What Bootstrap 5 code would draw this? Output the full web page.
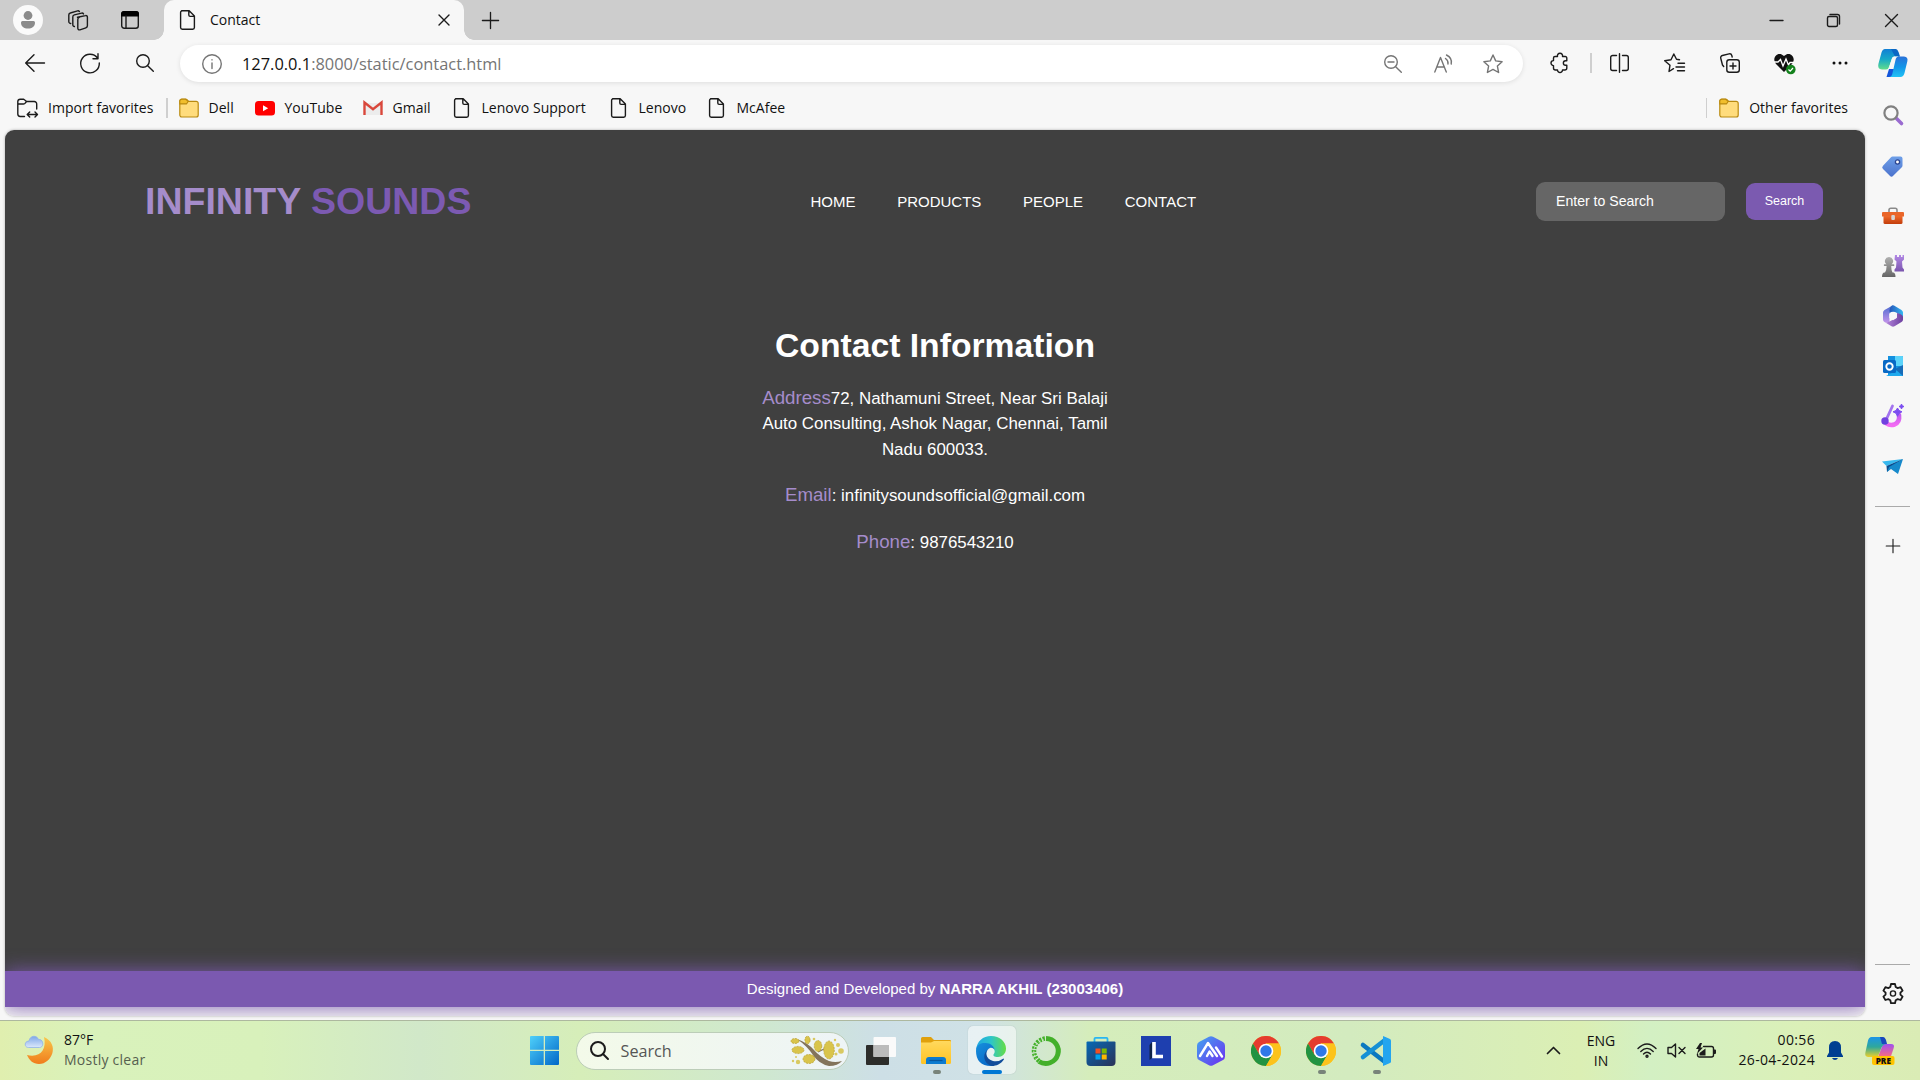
<!DOCTYPE html>
<html lang="en">
<head>
<meta charset="utf-8">
<meta name="viewport" content="width=device-width, initial-scale=1">
<title>Contact</title>
<link href="https://cdn.jsdelivr.net/npm/bootstrap@5.3.0/dist/css/bootstrap.min.css" rel="stylesheet">
<style>
  body { width: 1920px; height: 1080px; overflow: hidden; background: #f7f7f7; font-family: "Open Sans", "Noto Sans", sans-serif; font-size: 14px; line-height: 20px; color: #111; }
  svg { display: block; overflow: visible; flex: none; }
  .ln { fill: none; stroke: #1b1b1b; stroke-width: 1.4; stroke-linecap: round; stroke-linejoin: round; }
  .ln.grey { stroke: #757575; }
  .slot { display: flex; align-items: center; justify-content: center; flex: none; }
  .w28 { width: 28px; } .w30 { width: 30px; } .w40 { width: 40px; } .w49 { width: 49px; } .w50 { width: 50px; } .w52 { width: 52px; } .w54 { width: 54px; } .w55 { width: 55px; } .w56 { width: 56px; } .w58 { width: 57.5px; }

  .titlebar { height: 40px; background: #cdcdcd; padding-left: 3px; }
  .avatar { width: 30px; height: 30px; background: #fafafa; }
  .tab-active { position: relative; width: 300px; height: 40px; margin-left: 8px; background: #f7f7f7; border-radius: 10px 10px 0 0; padding: 0 11px 0 14px; }
  .tab-active::before, .tab-active::after { content: ""; position: absolute; bottom: 0; width: 10px; height: 10px; }
  .tab-active::before { left: -10px; background: radial-gradient(circle at 0 0, #cdcdcd 9.5px, #f7f7f7 10px); }
  .tab-active::after { right: -10px; background: radial-gradient(circle at 100% 0, #cdcdcd 9.5px, #f7f7f7 10px); }
  .tab-title { margin-left: 12px; }

  .toolbar { height: 46px; padding-left: 7px; }
  .address { width: 1343px; height: 37px; margin: 1px 9px 0 7px; background: #fff; box-shadow: 0 1px 5px rgba(0,0,0,.1); border-radius: 19px; padding-left: 22px; padding-right: 6px; }
  .url { margin-left: 20px; font-size: 16.4px; color: #757575; }
  .url b { font-weight: 400; color: #111; }
  .vline { width: 1.5px; height: 20px; background: #cfcfcf; flex: none; }

  .favbar { height: 44px; width: 1868px; padding-left: 17px; }
  .fav { display: flex; align-items: center; gap: 10px; flex: none; white-space: nowrap; letter-spacing: .03px; }
  .f1 { width: 149px; } .f2 { width: 76px; margin-left: 11px; } .f3 { width: 108px; } .f4 { width: 89px; } .f5 { width: 157px; } .f6 { width: 98px; }
  .fav-other { padding-right: 20px; }
  .fav-other .vline { margin-right: 2px; }

  .viewport { width: 1860px; height: 886px; margin-left: 5px; background: linear-gradient(#404040 0 841px, #f2f2f2 841px); border-radius: 9px; overflow: hidden; font-family: "Liberation Sans", Arial, sans-serif; color: #fff; box-shadow: 0 0 3px rgba(0,0,0,.3); }
  .site-head { height: 141px; padding: 2px 42px 0 140px; }
  .brandname { font-size: 37.5px; font-weight: 700; line-height: 1; color: #a58ccb; width: 665.5px; white-space: nowrap; }
  .brandname span { color: #7c5ab2; }
  .site-nav { gap: 41.7px; font-size: 15px; width: 725.5px; }
  .site-nav a { color: #fff; text-decoration: none; }
  .search-field { width: 189px; height: 39px; background: #666; border: 0; border-radius: 9px; padding: 0 20px 2px; font-size: 14.1px; color: #fff; }
  .search-field::placeholder { color: #fff; opacity: 1; }
  .search-btn { width: 77px; height: 37px; margin-left: 21px; background: #7b5ab0; border: 0; border-radius: 9px; color: #fff; font-size: 12.5px; padding: 0 0 2px; }
  .contact { height: 700px; padding-top: 54px; font-size: 16.9px; line-height: 25.3px; }
  .contact h2 { font-size: 33.7px; line-height: 40px; font-weight: 700; margin: 0 0 20px; }
  .contact p { width: 350px; margin: 0 auto 20.5px; }
  .contact .label { font-size: 18.7px; color: #a58ccb; }
  .site-foot { height: 36px; background: #7b59b0; box-shadow: 0 0 19px rgba(123,89,176,.95); font-size: 15px; }

  .rail { position: absolute; left: 1868px; top: 90px; width: 49px; height: 928px; }
  .rail .slot { height: 50px; }
  .rail .slot:nth-child(2) { margin-top: 1px; }
  .rail hr { width: 35px; margin: 0 0 0 7px; border: 0; border-top: 1.5px solid #aaa; opacity: 1; }
  .rail .rail-end { margin-top: 15px; }
  .rail .rail-add { margin-top: 14px; }
  .rail-foot { height: 54px; }
  .rail-foot .slot { height: 54px; }

  .taskbar { height: 60px; margin-top: 4px; border-top: 1px solid #adb89f; padding-left: 25px;
    background: linear-gradient(90deg, #e0efaf 0, #d9f2bb 90px, #d8f1bb 260px, #d1e8c9 420px, #d6eeb9 580px, #cfe8cf 760px, #cddfe6 880px, #cfe1e6 980px, #d5edbb 1090px, #d3ebbf 1350px, #dbefb4 1580px, #d3f0c3 1650px, #dbf0b8 1800px, #daecb5 1920px); }
  .weather { width: 504.5px; gap: 10px; padding-bottom: 2px; }
  .weather-note { color: #56604f; letter-spacing: .25px; }
  .tasksearch { width: 273px; height: 38px; margin-left: 17px; border-radius: 19px; background: linear-gradient(90deg, #f3fae9, #eef4f6); border: 1px solid #bccdb8; padding: 0 5px 0 13px; font-size: 16.2px; color: #555; }
  .tasksearch .ln { stroke-width: 2; }
  .tasksearch span { margin-left: 12px; }
  .apps { margin-left: 5px; }
  .app { position: relative; width: 55px; height: 59px; }
  .app.running::after, .app.current::after { content: ""; position: absolute; bottom: 6px; left: 24px; width: 8px; height: 4px; border-radius: 2px; background: #78837a; }
  .app.current::after { left: 18px; width: 20px; background: #0078d4; }
  .app.current::before { content: ""; position: absolute; inset: 5px 3px 6px 4px; border-radius: 5px; background: rgba(255,255,255,.52); box-shadow: 0 0 1px #9aa; }
  .app svg { position: relative; z-index: 1; }
  .lang { width: 44px; margin-right: 10px; }
  .clock { width: 94px; white-space: nowrap; letter-spacing: .35px; padding-bottom: 1px; }
  .tray-end { width: 15px; }
</style>
<script src="https://cdn.jsdelivr.net/npm/bootstrap@5.3.0/dist/js/bootstrap.bundle.min.js"></script>
</head>
<body>
<svg width="0" height="0" class="position-absolute" aria-hidden="true">
  <defs>
    <linearGradient id="gFold" x2="0" y2="1"><stop stop-color="#ffd95e"/><stop offset="1" stop-color="#ffc323"/></linearGradient>
    <linearGradient id="gWin" x2="1" y2="1"><stop stop-color="#4fd0fa"/><stop offset="1" stop-color="#0067c8"/></linearGradient>
    <linearGradient id="gMoon" x2="0" y2="1"><stop stop-color="#f9c74a"/><stop offset="1" stop-color="#f07c1c"/></linearGradient>
    <linearGradient id="gCloud" x2="0" y2="1"><stop stop-color="#7ea6e8"/><stop offset="1" stop-color="#dbe8fb"/></linearGradient>
    <linearGradient id="gCopA" x2="0" y2="1"><stop stop-color="#127fd5"/><stop offset=".5" stop-color="#17a9c8"/><stop offset="1" stop-color="#62dd8b"/></linearGradient>
    <linearGradient id="gCopB" x2="0" y2="1"><stop stop-color="#2a72d8"/><stop offset=".5" stop-color="#1295e8"/><stop offset="1" stop-color="#22c2f5"/></linearGradient>
    <linearGradient id="gPreA" x2="0" y2="1"><stop stop-color="#1c94e8"/><stop offset=".5" stop-color="#2fa89b"/><stop offset="1" stop-color="#ecd02a"/></linearGradient>
    <linearGradient id="gPreB" x2="0" y2="1"><stop stop-color="#a050f0"/><stop offset="1" stop-color="#fb6e7c"/></linearGradient>
    <linearGradient id="gEdgeT" x2="1"><stop stop-color="#1fa6e3"/><stop offset=".5" stop-color="#2dc5c9"/><stop offset="1" stop-color="#66dd45"/></linearGradient>
    <linearGradient id="gEdgeL" x2=".6" y2="1"><stop stop-color="#1790dc"/><stop offset="1" stop-color="#0869c8"/></linearGradient>
    <linearGradient id="gStore" x2="1" y2="1"><stop stop-color="#0669b5"/><stop offset="1" stop-color="#2c3257"/></linearGradient>
    <linearGradient id="gHex" x2="1" y2="1"><stop stop-color="#42a6f0"/><stop offset="1" stop-color="#6d2cf0"/></linearGradient>
    <linearGradient id="gTag" x2="0" y2="1"><stop stop-color="#6e9fe8"/><stop offset="1" stop-color="#4c73cd"/></linearGradient>
    <linearGradient id="gBox" x2="0" y2="1"><stop stop-color="#ef6a2b"/><stop offset="1" stop-color="#c23d0b"/></linearGradient>
    <linearGradient id="gPawn" x2="0" y2="1"><stop stop-color="#b0b0b0"/><stop offset="1" stop-color="#666"/></linearGradient>
    <linearGradient id="gRook" x2="0" y2="1"><stop stop-color="#b389e6"/><stop offset="1" stop-color="#7a55ad"/></linearGradient>
    <linearGradient id="gPink" x2="0" y2="1"><stop stop-color="#c05df0"/><stop offset="1" stop-color="#f36bf3"/></linearGradient>
    <linearGradient id="gM1" x2="0" y2="1"><stop stop-color="#4a6bd0"/><stop offset="1" stop-color="#c193ea"/></linearGradient>
    <linearGradient id="gM2" x2="1" y2="0"><stop stop-color="#2455b8"/><stop offset="1" stop-color="#36b8f2"/></linearGradient>
    <linearGradient id="gM3" x2="1" y2="0"><stop stop-color="#b98ae0"/><stop offset="1" stop-color="#6c3f9f"/></linearGradient>
    <symbol id="file" viewBox="0 0 20 20"><path class="ln" d="M3.600.7h7.600l5.200 5.200v11.700a1.700 1.700 0 0 1-1.700 1.700H4.300a1.700 1.700 0 0 1-1.700-1.700V2.400A1.700 1.700 0 0 1 4.300.7M10.800.9v4.200a1.300 1.300 0 0 0 1.300 1.300h4.200"/></symbol>
    <symbol id="folder" viewBox="0 0 20 20"><path d="M.8 5v11.800A2 2 0 0 0 2.800 19h14.400a2 2 0 0 0 2-2V5.400a2 2 0 0 0-2-2H9.600L8 1.700A2 2 0 0 0 6.600 1.200H2.800a2 2 0 0 0-2 2z" fill="#ffdc7c" stroke="#b98a10" stroke-width="1.200"/><path d="M.8 5.900V3.200a2 2 0 0 1 2-2h3.800L9.300 3.400 7.800 5.500q-.4.4-1 .4z" fill="#f1be2c" stroke="#b98a10" stroke-width="1.100"/></symbol>
    <symbol id="plus" viewBox="0 0 20 20"><path class="ln" d="M10 1.500v17M1.500 10h17"/></symbol>
    <symbol id="star" viewBox="0 0 20 20"><path d="m10 1 2.700 5.900 6.400.8-4.700 4.400 1.200 6.400L10 15.400l-5.600 3.100 1.200-6.400L.9 7.700l6.400-.8z"/></symbol>
    <symbol id="chrome" viewBox="0 0 30 30"><circle cx="15" cy="15" r="15" fill="#fcc31c"/><path d="M2 7.500A15 15 0 0 1 28 7.500H15L8.500 19z" fill="#e53c2f"/><path d="M2 7.500A15 15 0 0 0 15 30l6.500-11.200L15 15 8.500 18.800z" fill="#229342"/><path d="M15 7.500H28A15 15 0 0 1 15 30l6.500-11.200z" fill="#fcc31c"/><circle cx="15" cy="15" r="7.300" fill="#fff"/><circle cx="15" cy="15" r="5.700" fill="#2f78e8"/></symbol>
  </defs>
</svg>

<header>
  <div class="titlebar d-flex align-items-center">
    <div class="slot w49"><div class="avatar rounded-circle slot"><svg width="14" height="18" viewBox="0 0 14 18" fill="#8b8b8b"><circle cx="7" cy="4.500" r="4.400"/><path d="M0 11.500a1.500 1.500 0 0 1 1.500-1.500h11a1.500 1.500 0 0 1 1.500 1.500c0 4-3 6-7 6s-7-2-7-6z"/></svg></div></div>
    <div class="slot w52"><svg width="21" height="21" viewBox="0 0 21 21" class="ln"><path d="m9.500 7.300 8-1.700a1.500 1.500 0 0 1 1.900 1.500v8.700a2 2 0 0 1-1.500 2l-6 2a1.600 1.600 0 0 1-2.100-1.500V9.400a2 2 0 0 1 1.500-2M6.400 16.500l-.7-.2a1.500 1.500 0 0 1-.9-1.500V6.900a2 2 0 0 1 1.500-2l7.400-1.800q1.200-.2 1.800.8M2.700 13.500l-1-.4a1.500 1.500 0 0 1-.9-1.500V5a2 2 0 0 1 1.500-2L9.600.9q1-.3 1.800.6"/></svg></div>
    <div class="slot w52"><svg width="18" height="18" viewBox="0 0 18 18"><rect class="ln" x=".7" y=".7" width="16.600" height="16.600" rx="2.500"/><path d="M0 5.500V3a3 3 0 0 1 3-3h12a3 3 0 0 1 3 3v2.500z" fill="#000"/><path class="ln" d="M5 5v12"/></svg></div>
    <div class="tab-active d-flex align-items-center">
      <svg width="20" height="20"><use href="#file"/></svg><span class="tab-title">Contact</span>
      <svg class="ms-auto me-1 ln" width="10" height="10" viewBox="0 0 10 10"><path d="m0 0 10 10M10 0 0 10"/></svg>
    </div>
    <div class="slot w52"><svg width="19" height="19"><use href="#plus"/></svg></div>
    <div class="ms-auto d-flex">
      <div class="slot w58"><svg width="13" height="13"><path class="ln" d="M0 6.500h13"/></svg></div>
      <div class="slot w58"><svg class="ln" width="13" height="13" viewBox="0 0 13 13"><rect x=".5" y="2.500" width="10" height="10" rx="1.500"/><path d="M3 .5h7.500a2 2 0 0 1 2 2V10"/></svg></div>
      <div class="slot w58"><svg class="ln" width="13" height="13" viewBox="0 0 13 13"><path d="m.5.5 12 12M12.500.5l-12 12"/></svg></div>
    </div>
  </div>

  <div class="toolbar d-flex align-items-center">
    <div class="slot w56"><svg class="ln" width="20" height="18" viewBox="0 0 20 18"><path d="M9 .7.7 9 9 17.300M1 9h18.500"/></svg></div>
    <div class="slot w54"><svg class="ln" width="20" height="20" viewBox="0 0 20 20"><path d="M17.500 5A9.300 9.300 0 1 0 19.300 10M18 .7v5h-5"/></svg></div>
    <div class="slot w56"><svg class="ln" width="18" height="18" viewBox="0 0 18 18"><circle cx="7" cy="7" r="6.300"/><path d="m11.700 11.700 5.600 5.600"/></svg></div>
    <div class="address d-flex align-items-center">
      <svg class="ln grey" width="20" height="20" viewBox="0 0 20 20"><circle cx="10" cy="10" r="9.300"/><path d="M10 9v5.500M10 5.800v.1"/></svg>
      <span class="url"><b>127.0.0.1</b>:8000/static/contact.html</span>
      <div class="ms-auto d-flex">
        <div class="slot w52"><svg class="ln grey" width="18" height="18" viewBox="0 0 18 18"><circle cx="7" cy="7" r="6.300"/><path d="m11.700 11.700 5.600 5.600M4 7h6"/></svg></div>
        <div class="slot w49"><svg class="ln grey" width="20" height="20" viewBox="0 0 20 20"><path d="M.8 18 6.500 3.500 12.300 18M2.700 13h7.700M11.500 4.500q3 2 2.500 5.500M12.500 1q6 3 4.700 9"/></svg></div>
        <div class="slot w49"><svg class="ln grey" width="20" height="20"><use href="#star"/></svg></div>
      </div>
    </div>
    <div class="slot w54"><svg class="ln" width="19" height="20" viewBox="0 0 19 20"><path d="M5 3.500h2.500a2.600 2.600 0 1 1 5 0h2.800a1.500 1.500 0 0 1 1.500 1.500v2.800h-1.200a2.200 2.200 0 1 0 0 4.500h1.200V15a2 2 0 0 1-2 2h-2.300a2.500 2.500 0 1 1-5 0H5.500a2 2 0 0 1-2-2v-2.400a2.500 2.500 0 1 1 0-5V5A1.500 1.500 0 0 1 5 3.500z"/></svg></div>
    <div class="vline ms-1"></div>
    <div class="slot w55"><svg class="ln" width="19" height="20" viewBox="0 0 19 20"><path d="M9.500.7v18.600M6.500 2.500H2.700a2 2 0 0 0-2 2v11a2 2 0 0 0 2 2h3.800M12.500 2.500h3.800a2 2 0 0 1 2 2v11a2 2 0 0 1-2 2h-3.800"/></svg></div>
    <div class="slot w56"><svg class="ln" width="21" height="20" viewBox="0 0 21 20"><path d="M9.500 15.700 5 18.500l1-6.300-5.300-4.500 6.300-1L9.800 1l2.700 5.300 3 .4M14 10.200h6.500M12 14h8.500M13.500 17.700h7"/></svg></div>
    <div class="slot w55"><svg class="ln" width="20" height="20" viewBox="0 0 20 20"><rect x="6.800" y="6.800" width="12.500" height="12.500" rx="2.500"/><path d="M13 10v6M10 13h6M3.700 13.500 2.500 12 .8 5.500a2.300 2.300 0 0 1 1.600-3L9 .9a2.300 2.300 0 0 1 2.800 1.600l.4 1.500"/></svg></div>
    <div class="slot w55"><svg width="22" height="20" viewBox="0 0 22 20"><path d="M10 19 2 11C-3 5 4-3 10 3c6-6 13 2 8 8z" fill="#111"/><path d="M0 9h4l2.500-2.500L9 13l3-7 2.500 6 1.500-2.500h4" fill="none" stroke="#fff" stroke-width="1.300"/><circle cx="16.800" cy="16.500" r="4.800" fill="#14821d"/><path d="m14.500 16.500 1.700 1.700 2.800-3.200" fill="none" stroke="#fff" stroke-width="1.200"/></svg></div>
    <div class="slot w55"><svg width="16" height="4" fill="#111"><circle cx="2" cy="2" r="1.500"/><circle cx="8" cy="2" r="1.500"/><circle cx="14" cy="2" r="1.500"/></svg></div>
    <div class="slot w50"><svg width="30" height="28" viewBox="0 0 30 28"><path d="M11 20 8.500 28H20q3 0 4-3l1.500-5z" fill="#1456db"/><path d="M7 0h10q2 0 3 3l1.500 4.500h-5q-2 0-2.600 2L11 18q-.7 2.500-3 2.500H4Q-.8 20 .4 15L3.500 3.500Q4.500 0 7 0z" fill="url(#gCopA)"/><path d="M13 0h4.500q2 0 3 3l1.500 4.500h-5z" fill="#0b67c4"/><path d="M14 9.500q.6-2 2.600-2H20L16.500 20H10.500z" fill="#f7f7f7"/><path d="M21 7.500h5q4.500.5 3.300 5L26.500 24q-1 4-4 4H11q2.500 0 3.300-3l3.300-14.500q.7-3 3.400-3z" fill="url(#gCopB)"/></svg></div>
  </div>

  <nav class="favbar d-flex align-items-center">
    <div class="fav f1"><svg class="ln" width="21" height="20" viewBox="0 0 21 20"><path d="M7.500 18.500H3.200a2.400 2.400 0 0 1-2.400-2.400V3.500A2.400 2.400 0 0 1 3.200 1.200h3.500l3 2.300h7.600a2.400 2.400 0 0 1 2.400 2.400V11M.9 6h5.600q1.200 0 1.800-1l1.200-1.500M10.500 16.500h9.700M12.700 14l-2.500 2.500 2.500 2.500M18 14l2.500 2.500L18 19"/></svg><span>Import favorites</span></div>
    <div class="vline"></div>
    <div class="fav f2"><svg width="20" height="20"><use href="#folder"/></svg>Dell</div>
    <div class="fav f3"><svg width="20" height="20"><rect y="3" width="20" height="14.500" rx="3.500" fill="#f00"/><path d="m8 7.200 5.200 3L8 13.300z" fill="#fff"/></svg>YouTube</div>
    <div class="fav f4"><svg width="20" height="20"><path d="M2.500 5h15v12h-15z" fill="#ececec"/><path d="M1.500 17V4.500L10 11.300l8.500-6.800V17" fill="none" stroke="#d9473b" stroke-width="2.400"/></svg>Gmail</div>
    <div class="fav f5"><svg width="20" height="20"><use href="#file"/></svg>Lenovo Support</div>
    <div class="fav f6"><svg width="20" height="20"><use href="#file"/></svg>Lenovo</div>
    <div class="fav"><svg width="20" height="20"><use href="#file"/></svg>McAfee</div>
    <div class="ms-auto fav fav-other"><div class="vline"></div><svg width="20" height="20"><use href="#folder"/></svg><span>Other favorites</span></div>
  </nav>
</header>

<main class="viewport">
  <header class="site-head d-flex align-items-center">
    <div class="brandname">INFINITY <span>SOUNDS</span></div>
    <nav class="site-nav d-flex"><a href="#">HOME</a><a href="#">PRODUCTS</a><a href="#">PEOPLE</a><a href="#">CONTACT</a></nav>
    <input class="search-field" type="text" placeholder="Enter to Search">
    <button class="search-btn" type="button">Search</button>
  </header>
  <section class="contact text-center">
    <h2>Contact Information</h2>
    <p><span class="label">Address</span>72, Nathamuni Street, Near Sri Balaji Auto Consulting, Ashok Nagar, Chennai, Tamil Nadu 600033.</p>
    <p><span class="label">Email</span>: infinitysoundsofficial@gmail.com</p>
    <p><span class="label">Phone</span>: 9876543210</p>
  </section>
  <footer class="site-foot d-flex align-items-center justify-content-center"><span>Designed and Developed by <b>NARRA AKHIL (23003406)</b></span></footer>
</main>

<aside class="rail d-flex flex-column">
  <div class="slot"><svg width="20" height="20" viewBox="0 0 20 20"><path d="m13.500 13.500 5 5" stroke="#9a6bd0" stroke-width="3.600" stroke-linecap="round"/><circle cx="8" cy="8" r="6.600" fill="none" stroke="#808080" stroke-width="2.200"/></svg></div>
  <div class="slot"><svg width="21" height="21" viewBox="0 0 21 21"><path d="M10.500.5h8q2 0 2 2v7q0 1-.7 1.700l-8.600 8.600q-1.700 1.700-3.400 0L1 13q-1.700-1.600 0-3.300l8-8.500q.6-.7 1.500-.7z" fill="url(#gTag)"/><circle cx="15.500" cy="6" r="2.100" fill="#fff" stroke="#2d4691" stroke-width="1.300"/></svg></div>
  <div class="slot"><svg width="22" height="18" viewBox="0 0 22 18"><path d="M7 5.500V3q0-1.800 1.800-1.800h4.400Q15 1.200 15 3v2.500" fill="none" stroke="#8a8a8a" stroke-width="1.600"/><path d="M1 5h20q1 0 1 1v3.500H0V6q0-1 1-1z" fill="#ea662a"/><path d="M1.500 9h19v6.500q0 1.500-1.500 1.500H3q-1.500 0-1.500-1.500z" fill="url(#gBox)"/><rect x="9.300" y="8" width="3.600" height="5" rx="1" fill="#d5d5d5"/></svg></div>
  <div class="slot"><svg width="22" height="22" viewBox="0 0 22 22"><path d="M13 0h2v2h2V0h2v2h1.500V0H22v4.500l-2 2 .5 6 1.500 2v2h-9.500v-2l1.500-2 .5-6-2-2z" fill="url(#gRook)"/><path d="M7 2a4 4 0 0 1 2.500 7.200H12q.8 1 0 1.800H9.200q0 4 1.300 6.500h1q2 .8 2 4.500H0q0-3.700 2-4.500h1q1.600-2.500 1.600-6.500H2.200q-1-1 0-1.800h2.300A4 4 0 0 1 7 2z" fill="url(#gPawn)"/></svg></div>
  <div class="slot"><svg width="20" height="22" viewBox="0 0 20 22"><path d="M10 .2 1.500 5Q0 6 0 7.500v7q0 1.500 1.500 2.500 2.500 1 5-.2V8.500Q6.500 5 10 .2z" fill="url(#gM1)"/><path d="M9 .6q1-.6 2 0l7.500 4.300Q20 6 20 7.500v5q-1.500-2-6-4.500-4-2.500-7.500 0Q6 3 9 .6z" fill="url(#gM2)"/><path d="M20 12v2.500q0 1.500-1.500 2.500l-7 4.300q-1.500.9-3 0L1.500 17q2.500 1 5-.4L14 12.500V8q6 1.500 6 4z" fill="url(#gM3)"/><path d="m10 7 3.700 2v4L10 15.300l-3.700-2.200V9z" fill="#f7f7f7"/></svg></div>
  <div class="slot"><svg width="20" height="20" viewBox="0 0 20 20"><path d="M5 0h14q1 0 1 1v18q0 1-1 1H5z" fill="#1390df"/><path d="M12 0h7q1 0 1 1v9h-8z" fill="#5bd3fa"/><path d="m3 20 17-9v8q0 1-1 1z" fill="#1fa9ed"/><path d="m12 13 8 7V9z" fill="#176cb8"/><rect y="4" width="13" height="13" rx="1.500" fill="#0869c5"/><circle cx="6.500" cy="10.500" r="3.200" fill="none" stroke="#fff" stroke-width="1.900"/></svg></div>
  <div class="slot"><svg width="23" height="24" viewBox="0 0 23 24"><path d="M18 11q1 7-4.500 9.500Q9 22 5.500 19.500" fill="none" stroke="url(#gPink)" stroke-width="4.600" stroke-linecap="round"/><path d="m11.500 2-6 13" stroke="#a273ee" stroke-width="2.800" stroke-linecap="round"/><circle cx="4" cy="17" r="3.700" fill="#7141df"/><path d="m16.500 4 1.500 2.500 3 1.300-3 1.500-1.500 3-1.500-3-3-1.500 3-1.300zM20.500 0l.8 1.700L23 2.500l-1.700.8-.8 1.700-.8-1.700-1.700-.8 1.700-.8z" fill="#7c4df0" stroke="#7c4df0"/></svg></div>
  <div class="slot"><svg width="21" height="15" viewBox="0 0 21 15"><path d="M21 0 0 2.500 4.500 7z" fill="#37b8ee"/><path d="M21 0 4.500 7 5 13l3-3z" fill="#0b4c8d"/><path d="m21 0-5 15-7-5-4 3 2-5z" fill="#1689cb"/></svg></div>
  <hr class="rail-end">
  <div class="slot rail-add"><svg width="16" height="16"><use href="#plus"/></svg></div>
  <div class="rail-foot mt-auto"><hr><div class="slot"><svg class="ln" width="20" height="21" viewBox="0 0 20 21"><path stroke-width="1.800" d="M8 1h4l.7 3 2 1.100 2.900-.9 2 3.400-2.200 2v2l2.200 2-2 3.400-2.900-.9-2 1.100-.7 3H8l-.7-3-2-1.100-2.900.9-2-3.400 2.200-2v-2l-2.200-2 2-3.400 2.900.9 2-1.100z"/><circle cx="10" cy="10.500" r="2.600"/></svg></div></div>
</aside>

<footer class="taskbar d-flex align-items-center">
  <div class="weather d-flex align-items-center">
    <svg width="29" height="28" viewBox="0 0 29 28"><path d="M19 1c16 7 8 27-5 27-6 0-10-4-12-9 13 3 20-5 17-18z" fill="url(#gMoon)"/><path d="M3.500 11.500C-1 11.500-1 5 4 5 5-1 12-1 13.500 3.500c5-1 6 8 1 8z" fill="url(#gCloud)" stroke="#91b3e8" stroke-width=".8"/></svg>
    <div><div>87°F</div><div class="weather-note">Mostly clear</div></div>
  </div>
  <div class="slot"><svg width="29" height="29" viewBox="0 0 29 29" fill="url(#gWin)"><path d="M1 0h12.700v13.700H0V1q0-1 1-1zM15 0h13q1 0 1 1v12.700H15zM0 15h13.700v14H1q-1 0-1-1zM15 15h14v13q0 1-1 1H15z"/></svg></div>
  <div class="tasksearch d-flex align-items-center">
    <svg class="ln" width="19" height="19" viewBox="0 0 19 19"><circle cx="8" cy="8" r="7"/><path d="m13 13 5 5"/></svg>
    <span class="text-nowrap">Search</span>
    <svg class="ms-auto" width="52" height="30" viewBox="0 0 52 30"><path d="M6 3q11 4 17 11t15 11q6 2 13 0-4 5-13 5-10-2-16-11T6 3z" fill="#83745b"/><path d="m25 19-7 4M27 16l8-4" fill="none" stroke="#83745b" stroke-width="1.300"/><g fill="#d9c44b" stroke="#b79d2e" stroke-width=".7" stroke-dasharray="2 1"><ellipse cx="4" cy="5" rx="4" ry="2.500"/><ellipse cx="16.500" cy="4" rx="2.600" ry="3.800"/><ellipse cx="7" cy="14" rx="6" ry="3.600"/><ellipse cx="27" cy="10" rx="3.800" ry="5.500"/><ellipse cx="38" cy="14" rx="5.300" ry="9"/><ellipse cx="18" cy="23" rx="6" ry="4.500"/></g><g fill="#d9c961"><circle cx="2" cy="25" r="1.200"/><circle cx="7" cy="26" r="2.200"/><circle cx="5" cy="21" r="1"/><circle cx="23" cy="3" r="1.300"/><circle cx="44" cy="4" r="1.200"/><circle cx="47" cy="9" r="2"/><circle cx="50" cy="15" r="2.800"/><circle cx="45" cy="18" r="1.500"/></g></svg>
  </div>
  <div class="apps d-flex">
    <div class="app slot"><svg width="30" height="28" viewBox="0 0 30 28"><rect y="8" width="23" height="20" rx="1" fill="#2d2d2b"/><rect x="7.500" width="22.500" height="20" rx="1" fill="#fafafa"/><path d="M7.500 8H23v12H7.500z" fill="#bbb"/></svg></div>
    <div class="app slot running"><svg width="30" height="27" viewBox="0 0 30 27"><path d="M0 1.500Q0 0 1.500 0H10l3 3H29q1 0 1 1v3H0z" fill="#e0a00c"/><path d="M0 5.500h10L13 4h16q1 0 1 1v20.500q0 1.500-1.500 1.500h-27Q0 27 0 25.500z" fill="url(#gFold)"/><path d="M5 27v-4q0-3 3-3h14q3 0 3 3v4z" fill="#0c7bd0"/><path d="M8.500 23.500h13" stroke="#07569d" stroke-width="1.200"/></svg></div>
    <div class="app slot current"><svg width="30" height="30" viewBox="0 0 30 30"><path d="M0 14C1 5 7 0 15 0c9 0 15 6 15 12.500C30 18 26 21 22 21c-4 0-5-1.500-4.500-2.500 1-1.500 1.500-2.500 1-4C17.500 8 7 5 0 14z" fill="url(#gEdgeT)"/><path d="M0 15C0 9 5 6.500 9.500 7c5 0 9 3.500 9 7-1-2-3-2.500-4.500-2-5 2-6 10 4 17.500Q16 30 15 30 0 29.500 0 15z" fill="url(#gEdgeL)"/><path d="M13 12.500C8 16 10 23 17 25q6 1 10.500-2.500.8.3.4 1C25 28 20 30 16 30 8 28 5 18 13 12.500z" fill="#114d9b"/></svg></div>
    <div class="app slot"><svg width="30" height="30" viewBox="0 0 30 30" fill="none" stroke="#43b02a"><path d="M15 2.500a12.500 12.500 0 1 1-7 23" stroke-width="5"/><path d="M8 25A12.500 12.500 0 0 1 15 2.500" stroke-width="4.500" stroke-dasharray="2.200 1.200"/><path d="M6 24A12 12 0 0 1 13 4" stroke="#d6ecc8" stroke-width="1" stroke-dasharray="2 2"/></svg></div>
    <div class="app slot"><svg width="30" height="30" viewBox="0 0 30 30"><path d="M8.500 6V2.800Q8.500 1.800 9.500 1.800h11q1 0 1 1V6" fill="none" stroke="#29b6f2" stroke-width="1.800"/><path d="M1.500 5.500h27q1 0 1 1V26q0 4-4 4h-21q-4 0-4-4V6.500q0-1 1-1z" fill="url(#gStore)"/><path d="M9.500 12.500h5v5h-5z" fill="#f25022"/><path d="M15.700 12.500h5v5h-5z" fill="#7fba00"/><path d="M9.500 18.500h5v5h-5z" fill="#00a4ef"/><path d="M15.700 18.500h5v5h-5z" fill="#ffb900"/></svg></div>
    <div class="app slot"><svg width="30" height="30" viewBox="0 0 30 30"><path d="M0 0h30v30H0z" fill="#1e3faf"/><path d="m11 6-2.500 3v15l2.500-2z" fill="#102348"/><path d="M13 6v14.500h9" fill="none" stroke="#fff" stroke-width="3.600"/></svg></div>
    <div class="app slot"><svg width="28" height="30" viewBox="0 0 28 30"><path d="M12 .7q2-1 4 0L26 6q2 1.200 2 3.500v11q0 2.300-2 3.500l-10 5.300q-2 1-4 0L2 24q-2-1.200-2-3.500v-11Q0 7.200 2 6z" fill="url(#gHex)"/><path d="m3 20 8-13 9 13M10 20l2.500-4.500 3 4.500M19 11.500l6 9" fill="none" stroke="#fff" stroke-width="2.400" stroke-linecap="round" stroke-linejoin="round"/></svg></div>
    <div class="app slot"><svg width="30" height="30"><use href="#chrome"/></svg></div>
    <div class="app slot running"><svg width="30" height="30"><use href="#chrome"/></svg></div>
    <div class="app slot running"><svg width="30" height="30" viewBox="0 0 30 30"><path d="m2 9 22 17" stroke="#0b78c0" stroke-width="4.600" stroke-linecap="round"/><path d="m2 21 22-17" stroke="#1590d5" stroke-width="4.600" stroke-linecap="round"/><path d="m22 0 7 3q1 .5 1 1.500v21q0 1-1 1.500l-7 3z" fill="#24a5ef"/></svg></div>
  </div>
  <div class="d-flex align-items-center ms-auto">
    <div class="slot w52"><svg class="ln" width="13" height="7" viewBox="0 0 13 7"><path stroke-width="1.700" d="M.5 6.500 6.500.5l6 6"/></svg></div>
    <div class="lang text-center">ENG<br>IN</div>
    <div class="w28 slot"><svg class="ln" width="20" height="15" viewBox="0 0 20 15"><path d="M1 5.500q9-9 18 0M3.800 8.500q6.200-6.300 12.400 0M6.500 11q3.500-3.500 7 0"/><circle cx="10" cy="13.300" r="1"/></svg></div>
    <div class="w30 slot"><svg class="ln" width="19" height="15" viewBox="0 0 19 15"><path d="M8.500 1v13l-4-3.500H1v-6h3.500zM12 4.500l6 6M18 4.500l-6 6"/></svg></div>
    <div class="w30 slot"><svg width="20" height="16" viewBox="0 0 20 16"><path class="ln" d="M7.500 3.500h8a2 2 0 0 1 2 2v6.500a2 2 0 0 1-2 2h-12a2 2 0 0 1-2-2v-1"/><path d="M18 6.500h1q1 0 1 1v2.500q0 1-1 1h-1zM4 0 0 6h2.500L1 11l6-6.500H4.500L6 0zM3.500 12.500V10l6-4.500v7z" fill="#1b1b1b"/></svg></div>
    <div class="clock text-end">00:56<br>26-04-2024</div>
    <div class="w40 slot"><svg width="16" height="19" viewBox="0 0 16 19" fill="#003f91"><path d="M8 0q6 0 6 6.500v5L16 15v1H0v-1l2-3.500v-5Q2 0 8 0zM5 17h6q-1 2-3 2t-3-2z"/></svg></div>
    <div class="w50 slot"><svg width="30" height="28" viewBox="0 0 30 28"><path d="M18 7h8q4 0 2.700 4l-3 9H13z" fill="url(#gPreB)"/><path d="M6.500 0h11q2 0 3 3l1 4q-3.500 0-5 3.500L14 17q-1 3-3.500 3H3Q-.5 19.500.4 15.500L3 3.500Q4 0 6.500 0z" fill="url(#gPreA)"/><path d="M15 0h3q2 0 3 3l1 4h-5z" fill="#1948bd"/><rect x="7" y="19" width="22.500" height="9" rx="2" fill="#ffc400"/><text x="18.300" y="26.600" text-anchor="middle" font-family="Open Sans, sans-serif" font-weight="800" font-size="8.200" fill="#111">PRE</text></svg></div>
    <div class="tray-end"></div>
  </div>
</footer>
</body>
</html>
